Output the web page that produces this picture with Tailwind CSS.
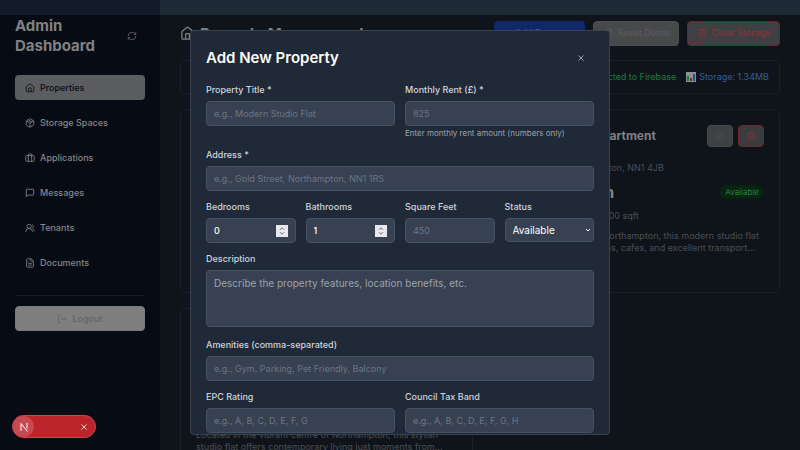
<!DOCTYPE html>
<html lang="en">
<head>
<meta charset="utf-8">
<meta name="viewport" content="width=device-width, initial-scale=1">
<title>Admin Dashboard</title>
<script src="https://cdn.jsdelivr.net/npm/@tailwindcss/browser@4"></script>
</head>
<body class="relative flex h-screen flex-col overflow-hidden bg-[#0f141b] font-[Inter,sans-serif] text-[9px] leading-3 text-[#4b4e53]">
<svg class="hidden" aria-hidden="true">
  <symbol id="home" viewBox="0 0 24 24"><path d="M15 21v-8a1 1 0 0 0-1-1h-4a1 1 0 0 0-1 1v8"/><path d="M3 10a2 2 0 0 1 .7-1.5l7-6a2 2 0 0 1 2.600 0l7 6A2 2 0 0 1 21 10v9a2 2 0 0 1-2 2H5a2 2 0 0 1-2-2z"/></symbol>
  <symbol id="box" viewBox="0 0 24 24"><path d="M11 21.700a2 2 0 0 0 2 0l7-4A2 2 0 0 0 21 16V8a2 2 0 0 0-1-1.700l-7-4a2 2 0 0 0-2 0l-7 4A2 2 0 0 0 3 8v8a2 2 0 0 0 1 1.700z"/><path d="M12 22V12M3.300 7 12 12l8.700-5M7.500 4.300l9 5.100"/></symbol>
  <symbol id="bag" viewBox="0 0 24 24"><rect x="2" y="6" width="20" height="14" rx="2"/><path d="M16 20V4a2 2 0 0 0-2-2h-4a2 2 0 0 0-2 2v16"/></symbol>
  <symbol id="msg" viewBox="0 0 24 24"><path d="M21 15a2 2 0 0 1-2 2H7l-4 4V5a2 2 0 0 1 2-2h14a2 2 0 0 1 2 2z"/></symbol>
  <symbol id="users" viewBox="0 0 24 24"><path d="M18 21a8 8 0 0 0-16 0"/><circle cx="10" cy="8" r="5"/><path d="M22 20c0-3.400-2-6.500-4-8a5 5 0 0 0-.45-8.300"/></symbol>
  <symbol id="doc" viewBox="0 0 24 24"><path d="M15 2H6a2 2 0 0 0-2 2v16a2 2 0 0 0 2 2h12a2 2 0 0 0 2-2V7z"/><path d="M14 2v4a2 2 0 0 0 2 2h4M10 9H8M16 13H8M16 17H8"/></symbol>
  <symbol id="refresh" viewBox="0 0 24 24"><path d="M3 12a9 9 0 0 1 9-9 9.750 9.750 0 0 1 6.740 2.740L21 8"/><path d="M21 3v5h-5M21 12a9 9 0 0 1-9 9 9.750 9.750 0 0 1-6.740-2.740L3 16"/><path d="M8 16H3v5"/></symbol>
  <symbol id="logout" viewBox="0 0 24 24"><path d="M9 21H5a2 2 0 0 1-2-2V5a2 2 0 0 1 2-2h4M16 17l5-5-5-5M21 12H9"/></symbol>
  <symbol id="trash" viewBox="0 0 24 24"><path d="M3 6h18M19 6v14a2 2 0 0 1-2 2H7a2 2 0 0 1-2-2V6M8 6V4a2 2 0 0 1 2-2h4a2 2 0 0 1 2 2v2M10 11v6M14 11v6"/></symbol>
  <symbol id="edit" viewBox="0 0 24 24"><path d="M12 3H5a2 2 0 0 0-2 2v14a2 2 0 0 0 2 2h14a2 2 0 0 0 2-2v-7"/><path d="M18.400 2.600a2.100 2.100 0 0 1 3 3L12 15l-4 1 1-4z"/></symbol>
  <symbol id="x" viewBox="0 0 24 24"><path d="M18 6 6 18M6 6l12 12"/></symbol>
  <symbol id="spin" viewBox="0 0 12 12"><rect width="12" height="12" fill="#e8e8ee" stroke="none"/><path d="M4 4.800 6 2.800l2 2M4 7.200l2 2 2-2" stroke="#6b6b74" stroke-width="1"/></symbol>
</svg>

<div class="flex h-[15px] shrink-0"><div class="w-40 bg-[#111a29]"></div><div class="flex-1 bg-[#1e2936]"></div></div>

<div class="flex min-h-0 flex-1">
  <aside class="w-40 shrink-0 bg-[#070b13] px-[15px] pt-px">
    <div class="flex items-center justify-between pr-2">
      <h2 class="text-[15px] leading-5 font-bold text-[#808183]">Admin<br>Dashboard</h2>
      <button type="button" aria-label="Refresh" class="text-[#66686b]"><svg class="size-[10px] fill-none stroke-current stroke-2"><use href="#refresh"/></svg></button>
    </div>
    <nav class="mt-[19px] flex flex-col gap-[10px] font-medium text-[#858789]">
      <a href="#" class="flex h-[25px] items-center gap-[5px] rounded bg-[#5c5d61] px-[10px] text-[#080c14]"><svg class="size-[10px] fill-none stroke-current stroke-2"><use href="#home"/></svg>Properties</a>
      <a href="#" class="flex h-[25px] items-center gap-[5px] px-[10px]"><svg class="size-[10px] fill-none stroke-current stroke-2"><use href="#box"/></svg>Storage Spaces</a>
      <a href="#" class="flex h-[25px] items-center gap-[5px] px-[10px]"><svg class="size-[10px] fill-none stroke-current stroke-2"><use href="#bag"/></svg>Applications</a>
      <a href="#" class="flex h-[25px] items-center gap-[5px] px-[10px]"><svg class="size-[10px] fill-none stroke-current stroke-2"><use href="#msg"/></svg>Messages</a>
      <a href="#" class="flex h-[25px] items-center gap-[5px] px-[10px]"><svg class="size-[10px] fill-none stroke-current stroke-2"><use href="#users"/></svg>Tenants</a>
      <a href="#" class="flex h-[25px] items-center gap-[5px] px-[10px]"><svg class="size-[10px] fill-none stroke-current stroke-2"><use href="#doc"/></svg>Documents</a>
    </nav>
    <div class="mt-5 border-t border-[#181c24] pt-[10px]">
      <button type="button" class="flex h-[25px] w-full items-center justify-center gap-[5px] rounded border border-[#77797b] bg-[#7f7f7f] font-medium text-[#626467]"><svg class="size-[10px] fill-none stroke-current stroke-2"><use href="#logout"/></svg>Logout</button>
    </div>
  </aside>

  <main class="min-w-0 flex-1 px-5 pt-[5px]">
    <header class="flex h-[25px] items-center justify-between">
      <h1 class="flex items-center gap-[5px] pt-[2px] text-[15px] leading-5 font-bold text-[#808183]"><svg class="size-[15px] fill-none stroke-current stroke-2"><use href="#home"/></svg>Property Management<span class="size-2 rounded-full border border-[#14532d]"></span></h1>
      <div class="flex items-center gap-2 pt-px font-medium">
        <button type="button" class="h-[25px] w-[91px] rounded bg-[#12276a] text-[#50608c]">+ Add Property</button>
        <button type="button" class="flex h-[25px] w-[86px] items-center justify-center gap-[5px] rounded border border-[#4c4e50] bg-[#48494a] text-[#595b5d]"><svg class="size-[10px] fill-none stroke-current stroke-2"><use href="#refresh"/></svg>Reset Demo</button>
        <button type="button" class="flex h-[25px] w-[93px] items-center justify-center gap-[5px] rounded border border-[#6f262b] bg-[#3e4043] text-[#8a3238]"><svg class="size-[10px] fill-none stroke-current stroke-2"><use href="#trash"/></svg>Clear Storage</button>
      </div>
    </header>
    <div class="mt-[15px] flex h-[34px] items-center justify-end gap-[10px] rounded border border-[#181e27] px-[10px]">
      <span class="text-[#1d7a41]">Connected to Firebase</span>
      <span class="flex items-center gap-[3px] text-[#315f9a]"><svg class="size-[10px]" viewBox="0 0 10 10" aria-hidden="true"><path d="M0 0h10v10H0z" fill="#8b9095"/><path d="M1 4h2v5H1z" fill="#167a35"/><path d="M4 6h2v3H4z" fill="#8e2020"/><path d="M7 2h2v7H7z" fill="#244f86"/></svg>Storage: 1.34MB</span>
    </div>
    <div class="mt-[15px] grid grid-cols-2 gap-[15px]">
      <article class="h-[184px] rounded border border-[#181e27]"></article>
      <article class="h-[184px] rounded border border-[#181e27] px-[15px] pt-[15px]">
        <div class="flex h-[22px] items-center justify-between">
          <h3 class="text-[12px] leading-4 font-bold text-[#808183]">Modern Studio Apartment</h3>
          <div class="flex gap-[5px]">
            <button type="button" aria-label="Edit" class="flex h-[22px] w-[26px] items-center justify-center rounded border border-[#434547] bg-[#3e4042] text-[#4c4e51]"><svg class="size-[10px] fill-none stroke-current stroke-2"><use href="#edit"/></svg></button>
            <button type="button" aria-label="Delete" class="flex h-[22px] w-[26px] items-center justify-center rounded border border-[#6f262b] bg-[#3a3c3f] text-[#84313a]"><svg class="size-[10px] fill-none stroke-current stroke-2"><use href="#trash"/></svg></button>
          </div>
        </div>
        <p class="mt-[15px]">5 Abington St, Northampton, NN1 4JB</p>
        <div class="mt-2 flex h-5 items-center justify-between"><strong class="text-[16px] font-bold text-[#808183]">£1,000/month</strong><span class="rounded-full bg-[#07240f] px-[5px] py-px text-[8px] text-[#27804a]">Available</span></div>
        <p class="mt-2 flex gap-[26px]"><span>1 bed</span><span>1 bath</span><span>800 sqft</span></p>
        <p class="mt-2">Located in the heart of Northampton, this modern studio flat<br>with easy access to shops, cafes, and excellent transport...</p>
      </article>
      <article class="h-[184px] rounded border border-[#181e27] px-[15px] pt-[120px]">
        <p>Located in the vibrant centre of Northampton, this stylish<br>studio flat offers contemporary living just moments from...</p>
      </article>
    </div>
  </main>
</div>

<div class="absolute inset-x-0 top-[15px] bottom-0 flex items-center justify-center">
  <section role="dialog" aria-labelledby="dlg" class="h-[90vh] w-[420px] max-w-full overflow-hidden rounded border border-[#374151] bg-[#1f2937] p-[15px] text-[#d1d5db]">
    <div class="flex h-[23px] items-center justify-between pr-2">
      <h2 id="dlg" class="text-[15px] leading-5 font-semibold text-white">Add New Property</h2>
      <button type="button" aria-label="Close" class="text-[#b4b8bf]"><svg class="size-[10px] fill-none stroke-current stroke-2"><use href="#x"/></svg></button>
    </div>
    <form class="mt-[15px] flex flex-col gap-[10px]">
      <div class="grid grid-cols-2 gap-[10px]">
        <div><label for="title" class="block font-medium">Property Title *</label><input id="title" placeholder="e.g., Modern Studio Flat" class="mt-[5px] block h-[25px] w-full rounded border border-[#465162] bg-[#374151] px-[7px] placeholder:text-[#6b7585]"></div>
        <div><label for="rent" class="block font-medium">Monthly Rent (£) *</label><input id="rent" placeholder="825" class="mt-[5px] block h-[25px] w-full rounded border border-[#465162] bg-[#374151] px-[7px] placeholder:text-[#6b7585]"><p class="mt-[2px] text-[8px] leading-[11px] text-[#9ca3af]">Enter monthly rent amount (numbers only)</p></div>
      </div>
      <div><label for="address" class="block font-medium">Address *</label><input id="address" placeholder="e.g., Gold Street, Northampton, NN1 1RS" class="mt-[5px] block h-[25px] w-full rounded border border-[#465162] bg-[#374151] px-[7px] placeholder:text-[#6b7585]"></div>
      <div class="grid grid-cols-4 gap-[10px]">
        <div><label for="beds" class="block font-medium">Bedrooms</label><div class="mt-[5px] flex h-[25px] items-center rounded border border-[#465162] bg-[#374151] px-[7px]"><input id="beds" type="number" value="0" class="w-0 flex-1 appearance-none font-medium text-white outline-none [&::-webkit-inner-spin-button]:appearance-none"><svg class="size-3 shrink-0 fill-none" aria-hidden="true"><use href="#spin"/></svg></div></div>
        <div><label for="baths" class="block font-medium">Bathrooms</label><div class="mt-[5px] flex h-[25px] items-center rounded border border-[#465162] bg-[#374151] px-[7px]"><input id="baths" type="number" value="1" class="w-0 flex-1 appearance-none font-medium text-white outline-none [&::-webkit-inner-spin-button]:appearance-none"><svg class="size-3 shrink-0 fill-none" aria-hidden="true"><use href="#spin"/></svg></div></div>
        <div><label for="sqft" class="block font-medium">Square Feet</label><input id="sqft" placeholder="450" class="mt-[5px] block h-[25px] w-full rounded border border-[#465162] bg-[#374151] px-[7px] placeholder:text-[#6b7585]"></div>
        <div><label for="status" class="block font-medium">Status</label><div class="mt-[5px] grid h-6 items-center"><select id="status" class="col-start-1 row-start-1 h-6 w-full appearance-none rounded border border-[#465162] bg-[#374151] px-[7px] text-[10px] text-white"><option>Available</option></select><svg class="pointer-events-none col-start-1 row-start-1 mr-[3px] size-[6px] justify-self-end fill-none stroke-white" viewBox="0 0 6 6" aria-hidden="true"><path d="m1 2 2 2 2-2"/></svg></div></div>
      </div>
      <div class="pb-[2px]"><label for="desc" class="block font-medium">Description</label><textarea id="desc" placeholder="Describe the property features, location benefits, etc." class="mt-[5px] block h-[57px] w-full resize-none rounded border border-[#465162] bg-[#374151] px-[7px] py-[5px] text-[10px] leading-[15px] placeholder:text-[#9ca3af]"></textarea></div>
      <div><label for="amen" class="block font-medium">Amenities (comma-separated)</label><input id="amen" placeholder="e.g., Gym, Parking, Pet Friendly, Balcony" class="mt-[5px] block h-[25px] w-full rounded border border-[#465162] bg-[#374151] px-[7px] placeholder:text-[#6b7585]"></div>
      <div class="grid grid-cols-2 gap-[10px]">
        <div><label for="epc" class="block font-medium">EPC Rating</label><input id="epc" placeholder="e.g., A, B, C, D, E, F, G" class="mt-[5px] block h-[25px] w-full rounded border border-[#465162] bg-[#374151] px-[7px] placeholder:text-[#6b7585]"></div>
        <div><label for="tax" class="block font-medium">Council Tax Band</label><input id="tax" placeholder="e.g., A, B, C, D, E, F, G, H" class="mt-[5px] block h-[25px] w-full rounded border border-[#465162] bg-[#374151] px-[7px] placeholder:text-[#6b7585]"></div>
      </div>
    </form>
  </section>
</div>

<div class="absolute bottom-3 left-3 flex h-[23px] w-[84px] items-center justify-between rounded-full border border-[#cf4a50] bg-[#bb242b] pr-[6px] text-white">
  <button type="button" aria-label="Open developer tools" class="flex size-[21px] items-center justify-center rounded-full bg-[#c74a50]"><svg class="size-[10px] fill-none stroke-current" viewBox="0 0 10 10"><path d="M2 9V1.500L8.500 9.500M8 1v5.500"/></svg></button>
  <button type="button" aria-label="Dismiss"><svg class="size-[10px] fill-none stroke-current stroke-2"><use href="#x"/></svg></button>
</div>
</body>
</html>
